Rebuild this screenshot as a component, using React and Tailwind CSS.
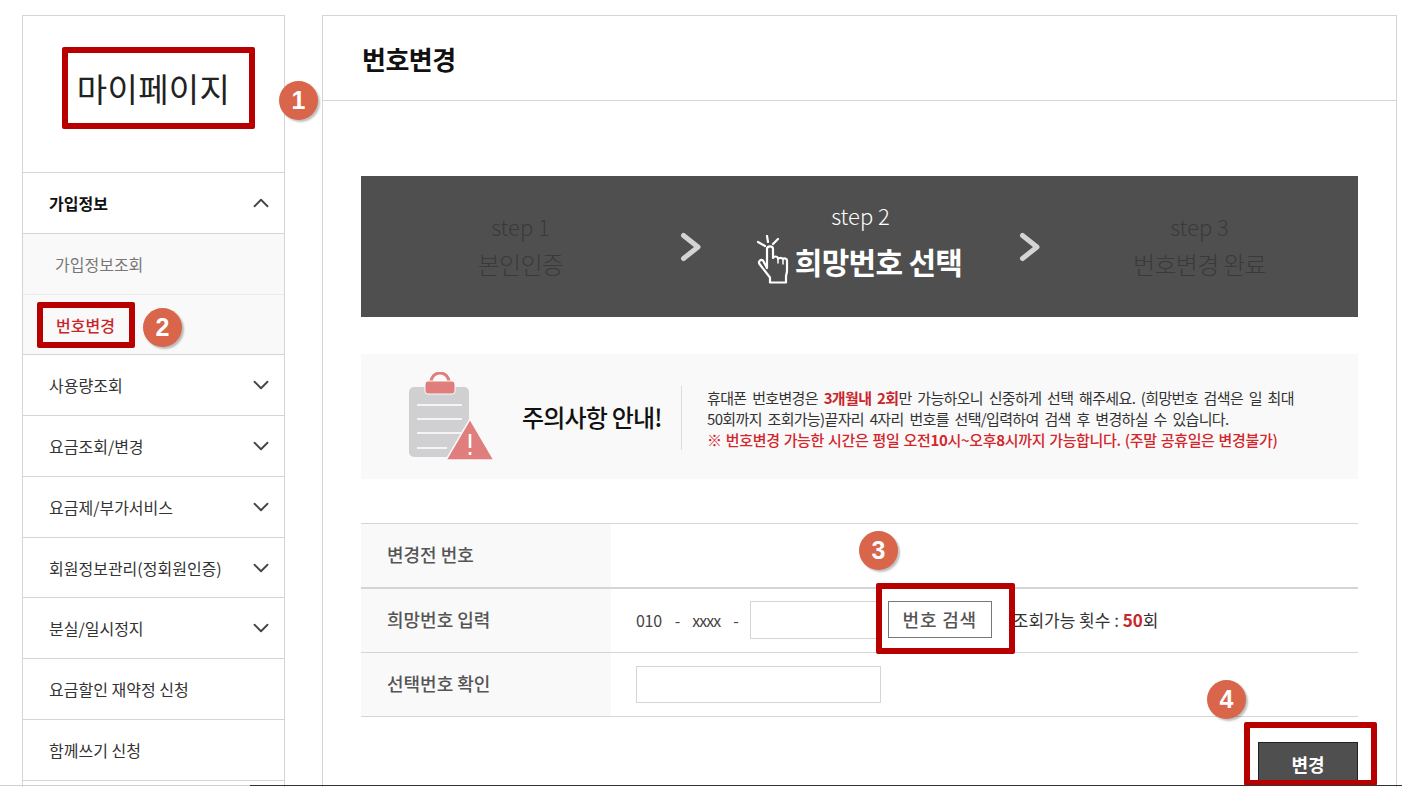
import { ChevronDown, ChevronUp } from "lucide-react";

const font = { fontFamily: '"Noto Sans CJK KR", "Noto Sans", sans-serif' };

const menus = [
  { label: "사용량조회", arrow: true, h: "h-[61px]" },
  { label: "요금조회/변경", arrow: true, h: "h-[61px]" },
  { label: "요금제/부가서비스", arrow: true, h: "h-[61px]" },
  { label: "회원정보관리(정회원인증)", arrow: true, h: "h-[60px]" },
  { label: "분실/일시정지", arrow: true, h: "h-[61px]" },
  { label: "요금할인 재약정 신청", h: "h-[61px]" },
  { label: "함께쓰기 신청", h: "h-[61px]" },
];

function Sidebar() {
  return (
    <aside className="w-[263px] shrink-0 border-x border-t border-[#d5d5d5] h-[772px] overflow-hidden">
      <div className="h-[157px] border-b border-[#d5d5d5] flex justify-center pt-[47px]">
        <h2 className="text-[33px] leading-[50px] tracking-[0.3px] text-[#222] font-normal">마이페이지</h2>
      </div>
      <div className="h-[61px] border-b border-[#d5d5d5] flex items-center justify-between pl-[26px] pr-[10px]">
        <span className="text-[16px] font-bold text-[#111]">가입정보</span>
        <ChevronUp size={26} strokeWidth={1.7} className="text-[#444]" />
      </div>
      <div className="h-[61px] border-b border-[#ececec] bg-[#f9f9f9] flex items-center pl-[32px] text-[16px] text-[#777]">
        가입정보조회
      </div>
      <div className="h-[60px] border-b border-[#d5d5d5] bg-[#f9f9f9] flex items-center pl-[33px] text-[16px] font-medium text-[#c9252c]">
        번호변경
      </div>
      {menus.map((m) => (
        <div
          key={m.label}
          className={`${m.h} border-b border-[#d5d5d5] flex items-center justify-between pl-[26px] pr-[10px] text-[16px] text-[#333]`}
        >
          <span>{m.label}</span>
          {m.arrow && <ChevronDown size={26} strokeWidth={1.7} className="text-[#444]" />}
        </div>
      ))}
    </aside>
  );
}

function HandIcon() {
  return (
    <svg width="36" height="50" viewBox="0 0 36 50" fill="none" stroke="#fff" strokeWidth="2.2" strokeLinecap="round" strokeLinejoin="round">
      <path d="M3 7l7 4M12 1l1 6M23 4l-5 5" />
      <path d="M12 33V14c0-3.5 6-3.5 6 0v9c1-2 4-2 5 0v1c1-1.5 4-1.5 5 0 1-1 4-.5 4 1.5v10c0 3-1 4-1 6v6H15v-5L4.5 29c-1.5-2.5 1-5 3.5-3.5z" />
      <path d="M23 23v5M28 25v4" strokeWidth="1.5" />
    </svg>
  );
}

function StepChevron() {
  return (
    <svg width="22" height="30" viewBox="0 0 22 30" fill="none" stroke="#d4d4d4" strokeWidth="5" strokeLinecap="round" strokeLinejoin="round">
      <path d="M3.5 3.5L18 15 3.5 26.5" />
    </svg>
  );
}

function StepBar() {
  return (
    <div className="mt-[75px] h-[141px] bg-[#4f4f4f] flex items-center">
      <div className="w-[319px] text-center text-[#3a3a3a] pt-[3px]">
        <div className="text-[22px] leading-[30px] font-light">step 1</div>
        <div className="text-[24px] leading-[42px] mt-[2px] font-light tracking-[-0.7px]">본인인증</div>
      </div>
      <StepChevron />
      <div className="w-[317px] text-center text-white pb-[9px]">
        <div className="text-[22px] leading-[30px] font-light">step 2</div>
        <div className="flex items-center justify-center gap-[4px] mt-[5px] h-[50px] -ml-[4px]">
          <HandIcon />
          <span className="text-[30px] font-bold leading-[42px] mt-[2px] tracking-[-0.7px]">희망번호 선택</span>
        </div>
      </div>
      <StepChevron />
      <div className="w-[317px] text-center text-[#3a3a3a] pt-[3px]">
        <div className="text-[22px] leading-[30px] font-light">step 3</div>
        <div className="text-[24px] leading-[42px] mt-[2px] font-light tracking-[-0.7px]">번호변경 완료</div>
      </div>
    </div>
  );
}

function ClipboardIcon() {
  return (
    <svg width="90" height="90" viewBox="0 0 90 90" className="shrink-0">
      <rect x="1" y="15" width="60" height="70" rx="5" fill="#d0d0d2" />
      <path d="M23 10a9 9 0 0 1 18 0" fill="none" stroke="#e07d7d" strokeWidth="3" />
      <rect x="17" y="9" width="30" height="13" rx="3" fill="#e07d7d" stroke="#f9f9f9" strokeWidth="1" />
      <path d="M9 33h45M9 47h45M9 61h45M9 76h30" stroke="#f4f4f4" strokeWidth="2.2" />
      <path d="M62 47L86 88H38z" fill="#e07d7d" stroke="#f9f9f9" strokeWidth="1.5" />
      <path d="M62 62v14M62 80v3" stroke="#fff" strokeWidth="2.6" />
    </svg>
  );
}

function Notice() {
  return (
    <div className="mt-[37px] h-[125px] bg-[#f9f9f9] flex items-center pl-[47px]">
      <ClipboardIcon />
      <strong className="ml-[24px] text-[24px] font-medium tracking-[-0.8px] text-[#111] w-[159px] shrink-0">
        주의사항 안내!
      </strong>
      <div className="w-px h-[64px] mt-[2px] bg-[#ddd] shrink-0" />
      <div className="ml-[25px] mt-[4px] w-[610px] whitespace-nowrap text-[15px] leading-[21px] text-[#333]">
        <p className="tracking-[-0.65px] [word-spacing:3px]">
          휴대폰 번호변경은 <b className="text-[#c9252c]">3개월내 2회</b>만 가능하오니 신중하게 선택 해주세요. (희망번호 검색은 일 최대
          <br />
          50회까지 조회가능)끝자리 4자리 번호를 선택/입력하여 검색 후 변경하실 수 있습니다.
        </p>
        <p className="text-[#d3262c] font-medium tracking-[-0.33px] [word-spacing:1px]">
          ※ 번호변경 가능한 시간은 평일 오전<b>10</b>시~오후<b>8</b>시까지 가능합니다. (주말 공휴일은 변경불가)
        </p>
      </div>
    </div>
  );
}

function Row({ label, className, children }) {
  return (
    <div className={`flex ${className}`}>
      <div className="w-[250px] bg-[#f9f9f9] flex items-center pl-[26px] pb-[2px] text-[18px] font-medium text-[#555]">{label}</div>
      <div className="flex-1 flex items-center pl-[25px] text-[16px] text-[#444]">{children}</div>
    </div>
  );
}

function Form() {
  return (
    <div className="mt-[44px] border-t border-[#d5d5d5]">
      <Row label="변경전 번호" className="h-[65px] border-b-2 border-[#d5d5d5]" />
      <Row label="희망번호 입력" className="h-[64px] border-b border-[#d5d5d5]">
        <span className="tracking-[-0.3px] -mt-[2px]">010</span>
        <span className="ml-[13px] -mt-[2px]">-</span>
        <span className="ml-[12px] -mt-[2px] text-[16px] tracking-[-1px]">xxxx</span>
        <span className="ml-[13px] -mt-[2px]">-</span>
        <input className="ml-[11px] -mt-[2px] w-[127px] h-[38px] bg-white border border-[#d5d5d5]" />
        <button className="ml-[11px] -mt-[2px] w-[104px] h-[37px] border border-[#777] text-[18px] font-medium tracking-[0.8px] text-[#555]">
          번호 검색
        </button>
        <span className="ml-[21px] -mt-[2px] text-[17px] text-[#333]">
          조회가능 횟수 : <b className="text-[#c9252c]">50</b>회
        </span>
      </Row>
      <Row label="선택번호 확인" className="h-[64px] border-b border-[#d5d5d5]">
        <input className="w-[245px] h-[37px] bg-white border border-[#d5d5d5]" />
      </Row>
      <div className="flex justify-end mt-[25px]">
        <button className="w-[100px] h-[44px] bg-[#4f4f4f] border border-[#222] text-white text-[18px] font-bold">변경</button>
      </div>
    </div>
  );
}

// 빨간 주석 박스 + 번호 뱃지
function Mark({ className }) {
  return <div className={`absolute border-[6px] border-[#b80000] rounded-[2px] ${className}`} />;
}

function Badge({ n, className }) {
  return (
    <div
      className={`absolute w-[39px] h-[39px] rounded-full bg-[#d9654a] text-white text-[25px] font-bold flex items-center justify-center shadow-[2px_2px_2px_rgba(0,0,0,0.25)] ${className}`}
      style={{ fontFamily: '"Liberation Sans", sans-serif' }}
    >
      {n}
    </div>
  );
}

export default function App() {
  return (
    <div className="relative h-[787px] overflow-hidden bg-white" style={font}>
      <div className="flex pt-[15px] pl-[22px] gap-[37px]">
        <Sidebar />
        <main className="w-[1075px] h-[772px] shrink-0 border-x border-t border-[#d5d5d5]">
          <div className="h-[85px] border-b border-[#d5d5d5] flex items-center pl-[39px]">
            <h1 className="text-[26px] font-bold tracking-[-0.5px] text-[#111]">번호변경</h1>
          </div>
          <div className="pl-[38px] pr-[38px]">
            <StepBar />
            <Notice />
            <Form />
          </div>
        </main>
      </div>

      <Mark className="left-[62px] top-[47px] w-[193px] h-[82px]" />
      <Mark className="left-[37px] top-[302px] w-[98px] h-[46px]" />
      <Mark className="left-[876px] top-[583px] w-[139px] h-[71px]" />
      <Mark className="left-[1244px] top-[722px] w-[133px] h-[64px]" />
      <Badge n="1" className="left-[279px] top-[81px]" />
      <Badge n="2" className="left-[143px] top-[308px]" />
      <Badge n="3" className="left-[859px] top-[531px]" />
      <Badge n="4" className="left-[1207px] top-[680px]" />

      <div className="absolute left-0 right-0 bottom-[1px] h-px bg-[#cfcfcf]" />
      <div className="absolute left-[250px] right-0 bottom-[1px] h-px bg-[#333]" />
    </div>
  );
}
